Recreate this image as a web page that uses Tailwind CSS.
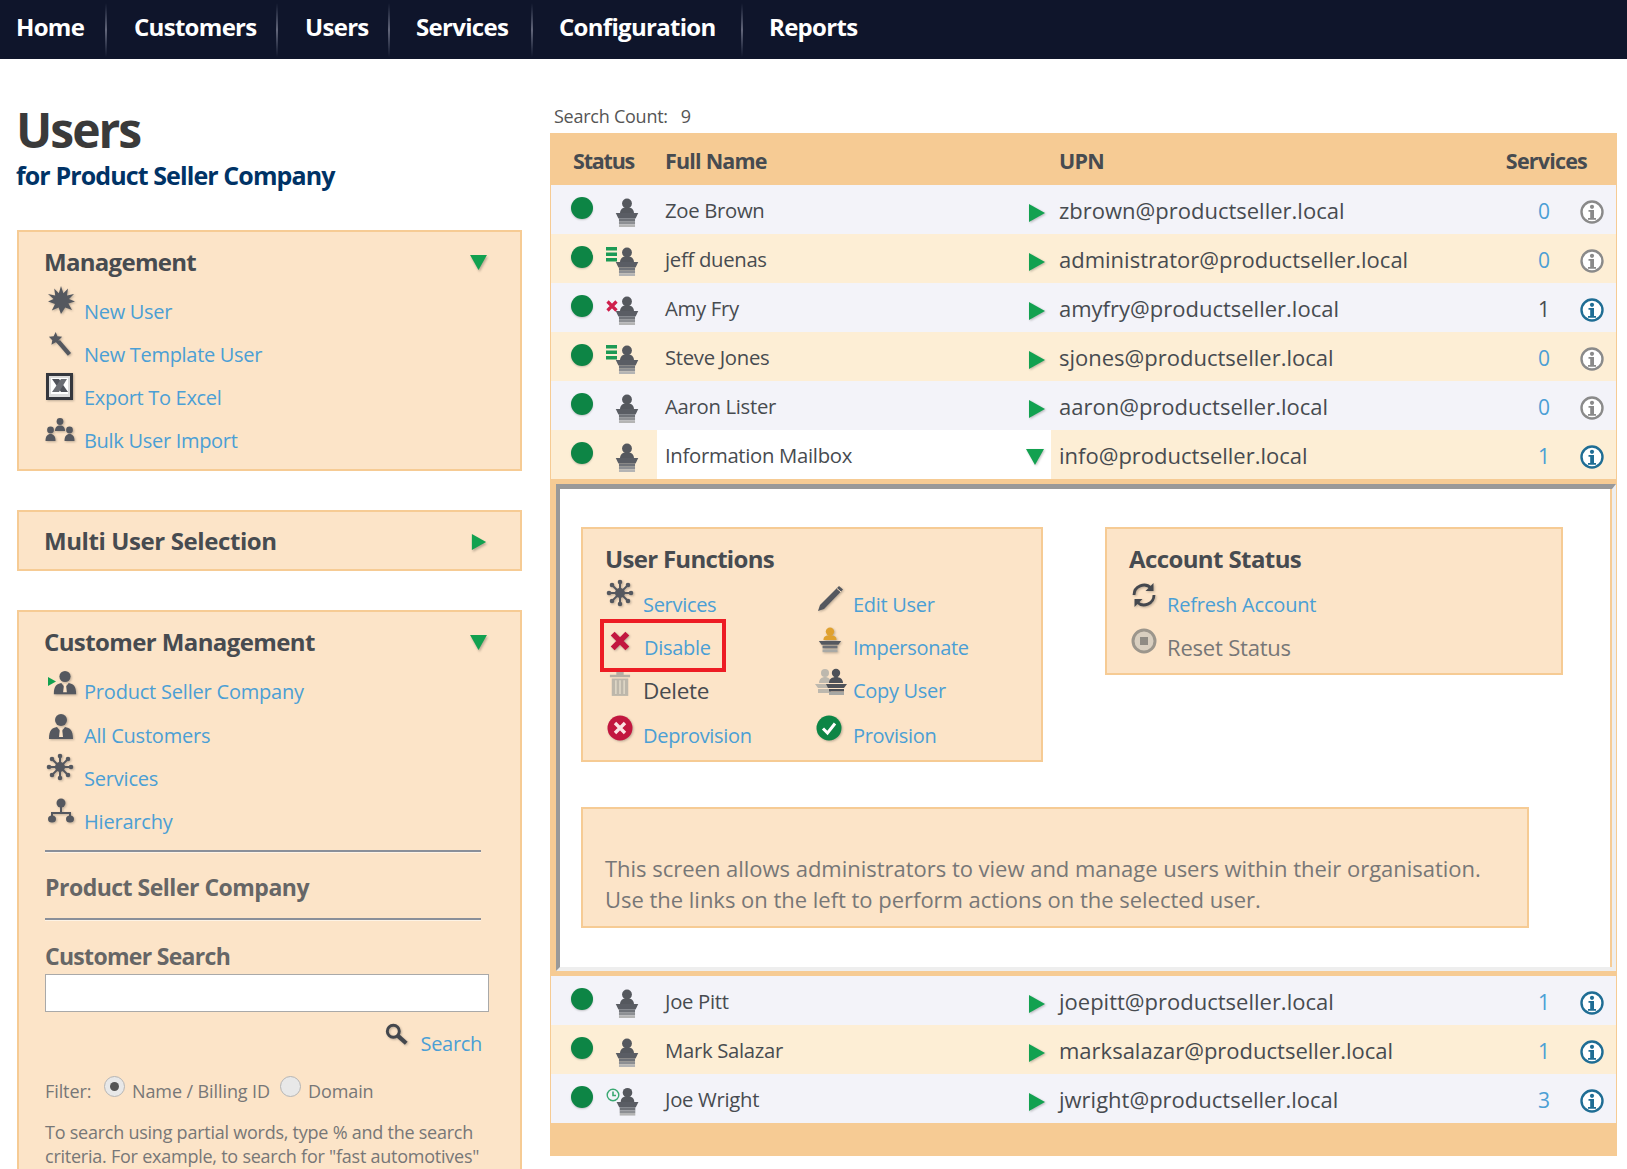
<!DOCTYPE html>
<html lang="en">
<head>
<meta charset="utf-8">
<title>Users</title>
<script src="https://cdn.jsdelivr.net/npm/@tailwindcss/browser@4"></script>
</head>
<body class="bg-white">
<!-- Shared icons -->
<svg class="hidden" xmlns="http://www.w3.org/2000/svg">
  <symbol id="i-user" viewBox="0 0 24 28">
    <circle cx="12" cy="6" r="4.6" fill="#55585e"/>
    <path d="M5.500 15c0-4 3-5.500 6.500-5.500s6.500 1.500 6.500 5.500z" fill="#55585e"/>
    <path d="M1.500 15h21l-2.500 5H4z" fill="#5a5d64"/>
    <path d="M4.500 20h15v3h-15z" fill="#6f7278"/>
    <path d="M4.500 23h15v2.500h-15z" fill="#8d8f93"/>
    <path d="M4.500 25.500h15V28h-15z" fill="#b4b4b4"/>
  </symbol>
  <symbol id="i-list" viewBox="0 0 12 16">
    <path d="M0 0h11v3.500H0zM0 5.500h11V9H0zM0 11h11v3.500H0z" fill="#1c9a55"/>
  </symbol>
  <symbol id="i-redx" viewBox="0 0 12 12">
    <path d="M1.500 1.500l9 9M10.500 1.500l-9 9" stroke="#cf1f4c" stroke-width="3.200"/>
  </symbol>
  <symbol id="i-clock" viewBox="0 0 14 14">
    <circle cx="7" cy="7" r="5.800" fill="none" stroke="#3aa872" stroke-width="1.400"/>
    <path d="M7 3.500V7.500h3" fill="none" stroke="#3aa872" stroke-width="1.600"/>
  </symbol>
  <symbol id="i-right" viewBox="0 0 16 18"><path d="M0 0l16 9L0 18z" fill="#12a150"/></symbol>
  <symbol id="i-down" viewBox="0 0 18 16"><path d="M0 0h18L9 16z" fill="#12a150"/></symbol>
  <symbol id="i-info" viewBox="0 0 24 24">
    <circle cx="12" cy="12" r="10.500" fill="#fff" stroke="currentColor" stroke-width="2.400"/>
    <circle cx="12" cy="6.800" r="2.100" fill="currentColor"/>
    <path d="M8.500 10h5.500v8h2v1.800H8V18h2.200v-6.200H8.500z" fill="currentColor"/>
  </symbol>
  <symbol id="i-burst" viewBox="0 0 28 28">
    <path d="M14 0l2.400 7.200L21 2.600l-1 7L27 8l-5 5 6 2.500-6.600 2 3.600 6.500-6.800-2.500L14 28l-2.400-6.500-6.800 3L8 18 1 15.500 6.500 13 1 8l7.200 1.600-1-7 4.600 4.600z" fill="#55585f"/>
  </symbol>
  <symbol id="i-wand" viewBox="0 0 28 28">
    <path d="M9 0l2 5 5.500.5-4 4 1.200 5.500-4.700-3-5 3L5 9.500 1 5.500 6.500 5z" fill="#55585f"/>
    <path d="M12 11l13 15" stroke="#55585f" stroke-width="5"/>
  </symbol>
  <symbol id="i-excel" viewBox="0 0 27 27">
    <rect x="1.500" y="1.500" width="24" height="24" fill="#dcdcdc" stroke="#35373d" stroke-width="3"/>
    <path d="M5 5h17v16H5z" fill="#fff"/>
    <path d="M6 6h7l9 13h-7z" fill="#50535a"/>
    <path d="M21 6h-6L6 19h7z" fill="#6a6d73"/>
  </symbol>
  <symbol id="i-group" viewBox="0 0 30 26">
    <g fill="#55585f">
      <circle cx="15" cy="3.500" r="3.400"/><path d="M10 13c0-4 2-5.500 5-5.500s5 1.500 5 5.500z"/>
      <circle cx="5.500" cy="12" r="3.400"/><path d="M.5 23c0-5 2-7 5-7s5 2 5 7z"/>
      <circle cx="24.500" cy="12" r="3.400"/><path d="M19.500 23c0-5 2-7 5-7s5 2 5 7z"/>
    </g>
  </symbol>
  <symbol id="i-customer" viewBox="0 0 28 28">
    <circle cx="14" cy="7" r="6" fill="#55585f"/>
    <path d="M2 26c0-9 3-11 8-12l4 5 4-5c5 1 8 3 8 12z" fill="#55585f"/>
    <path d="M13 15h2l1 9h-4z" fill="#fce4c8"/>
  </symbol>
  <symbol id="i-services" viewBox="0 0 28 28">
    <g stroke="#55585f" stroke-width="2" fill="#55585f">
      <path d="M14 2v24M2 14h24M5.500 5.500l17 17M22.500 5.500l-17 17" fill="none"/>
      <circle cx="14" cy="14" r="4"/>
      <circle cx="14" cy="3" r="1.300"/><circle cx="14" cy="25" r="1.300"/><circle cx="3" cy="14" r="1.300"/><circle cx="25" cy="14" r="1.300"/>
      <circle cx="6" cy="6" r="1.300"/><circle cx="22" cy="6" r="1.300"/><circle cx="6" cy="22" r="1.300"/><circle cx="22" cy="22" r="1.300"/>
    </g>
  </symbol>
  <symbol id="i-tree" viewBox="0 0 28 26">
    <circle cx="14" cy="5" r="4.500" fill="#55585f"/>
    <path d="M14 9v6M5 20v-5h18v5" fill="none" stroke="#55585f" stroke-width="2"/>
    <ellipse cx="5" cy="21" rx="4" ry="3.500" fill="#55585f"/><ellipse cx="23" cy="21" rx="4" ry="3.500" fill="#55585f"/>
  </symbol>
  <symbol id="i-search" viewBox="0 0 26 26">
    <circle cx="9" cy="9" r="6.500" fill="none" stroke="#44474d" stroke-width="3.200"/>
    <path d="M14 14l9 8" stroke="#44474d" stroke-width="4.500"/>
  </symbol>
  <symbol id="i-pencil" viewBox="0 0 28 28">
    <path d="M22 2l4 3.500L7 25l-6 2 2-6z" fill="#55585f"/>
    <path d="M20 4.500l4 3.500" stroke="#fce4c8" stroke-width="1"/>
  </symbol>
  <symbol id="i-imp" viewBox="0 0 28 30">
    <circle cx="14" cy="6" r="4.500" fill="#e0a12e"/>
    <path d="M7 15c0-4 3-5 7-5s7 1 7 5z" fill="#e0a12e"/>
    <path d="M2 16h24l-3 4H5z" fill="#55585f"/>
    <path d="M6 21h16v3H6z" fill="#6c6f75"/>
    <path d="M6 25h16v3H6z" fill="#a9a9a5"/>
  </symbol>
  <symbol id="i-copy" viewBox="0 0 32 28">
    <circle cx="10" cy="5" r="4" fill="#bdb8ae"/>
    <path d="M4 15c0-4 3-6 6-6s6 2 6 6zM0 16h16v4H3zM3 21h13v4H3z" fill="#bdb8ae"/>
    <circle cx="21" cy="5" r="4.200" fill="#4e5158"/>
    <path d="M14 15c0-4 3-6 7-6s7 2 7 6zM11 16h21l-3 4H13zM14 21h15v2.500H14z" fill="#4e5158"/>
    <path d="M14 24h15v3H14z" fill="#a7a7a3"/>
  </symbol>
  <symbol id="i-x" viewBox="0 0 24 24">
    <path d="M4 4l16 16M20 4L4 20" stroke="#c2173f" stroke-width="6"/>
  </symbol>
  <symbol id="i-trash" viewBox="0 0 24 28">
    <path d="M1 4h22v2.500H1zM8 1h8v3H8z" fill="#b5afa3"/>
    <path d="M3 8h18v19H3z" fill="#bdb7ab"/>
    <path d="M7.500 10v15M12 10v15M16.500 10v15" stroke="#e5dccb" stroke-width="1.500"/>
  </symbol>
  <symbol id="i-circlex" viewBox="0 0 26 26">
    <circle cx="13" cy="13" r="12.500" fill="#c2173f"/>
    <path d="M8 8l10 10M18 8L8 18" stroke="#fbe3e3" stroke-width="3.400"/>
  </symbol>
  <symbol id="i-check" viewBox="0 0 26 26">
    <circle cx="13" cy="13" r="12.500" fill="#0d8545"/>
    <path d="M7 13.500l4.500 4.500L19 8.500" fill="none" stroke="#fff" stroke-width="3"/>
  </symbol>
  <symbol id="i-refresh" viewBox="0 0 26 26">
    <path d="M3 13A10 10 0 0 1 20 6M23 13A10 10 0 0 1 6 20" fill="none" stroke="#45484e" stroke-width="2.800"/>
    <path d="M22.500 1v8h-8zM3.500 25v-8h8z" fill="#45484e"/>
  </symbol>
  <symbol id="i-stop" viewBox="0 0 26 26">
    <circle cx="13" cy="13" r="11" fill="#d9cfc0" stroke="#9c968c" stroke-width="3"/>
    <rect x="9" y="9" width="8" height="8" fill="#8f8b84"/>
  </symbol>
</svg>

<div class="h-[1169px] overflow-hidden font-['Open_Sans',sans-serif] text-[#474b50]">
  <!-- Top nav -->
  <nav class="flex h-[59px] items-center bg-[#0f152b] text-[24px] font-bold tracking-[-0.7px] text-white">
    <a class="mb-[5px] w-[105px] pl-[16px]">Home</a>
    <span class="h-[54px] w-[2px] bg-linear-to-b from-[#0f152b] via-[#62667a] to-[#0f152b]"></span>
    <a class="mb-[5px] w-[169px] pl-[27px]">Customers</a>
    <span class="h-[54px] w-[2px] bg-linear-to-b from-[#0f152b] via-[#62667a] to-[#0f152b]"></span>
    <a class="mb-[5px] w-[110px] pl-[27px]">Users</a>
    <span class="h-[54px] w-[2px] bg-linear-to-b from-[#0f152b] via-[#62667a] to-[#0f152b]"></span>
    <a class="mb-[5px] w-[141px] pl-[26px]">Services</a>
    <span class="h-[54px] w-[2px] bg-linear-to-b from-[#0f152b] via-[#62667a] to-[#0f152b]"></span>
    <a class="mb-[5px] w-[208px] pl-[26px]">Configuration</a>
    <span class="h-[54px] w-[2px] bg-linear-to-b from-[#0f152b] via-[#62667a] to-[#0f152b]"></span>
    <a class="mb-[5px] pl-[26px]">Reports</a>
  </nav>

  <div class="flex">
    <!-- Left column -->
    <aside class="w-[550px] shrink-0 pl-[17px]">
      <h1 class="mt-[41px] -ml-[1px] text-[48px] leading-[59px] font-bold tracking-[-2px] text-[#3a3a3a]">Users</h1>
      <h2 class="-ml-[1px] text-[25px] leading-[32px] font-bold tracking-[-0.9px] text-[#003366]">for Product Seller Company</h2>

      <section class="mt-[39px] h-[241px] w-[505px] border-2 border-[#f6cb94] bg-[#fce4c8] pl-[26px]">
        <div class="mt-[15px] flex h-[30px] items-center justify-between pr-[33px]">
          <h3 class="-ml-[1px] text-[24px] font-bold tracking-[-0.7px]">Management</h3>
          <svg class="h-[15px] w-[17px] drop-shadow-[1px_2px_1px_rgba(0,0,0,0.25)]"><use href="#i-down"/></svg>
        </div>
        <div class="mt-[13px] text-[20px] tracking-[-0.3px] text-[#4b9fd5]">
          <a class="flex h-[43px] items-center"><span class="w-[39px]"><svg class="-mt-[24px] ml-[2px] h-[28px] w-[28px] drop-shadow-[1px_1px_1px_rgba(0,0,0,0.25)]"><use href="#i-burst"/></svg></span>New User</a>
          <a class="flex h-[43px] items-center"><span class="w-[39px]"><svg class="-mt-[22px] ml-[3px] h-[28px] w-[24px] drop-shadow-[1px_1px_1px_rgba(0,0,0,0.25)]"><use href="#i-wand"/></svg></span>New Template User</a>
          <a class="flex h-[43px] items-center"><span class="w-[39px]"><svg class="-mt-[22px] ml-[1px] h-[27px] w-[27px] drop-shadow-[1px_1px_1px_rgba(0,0,0,0.25)]"><use href="#i-excel"/></svg></span>Export To Excel</a>
          <a class="flex h-[43px] items-center"><span class="w-[39px]"><svg class="-mt-[20px] h-[26px] w-[30px] drop-shadow-[1px_1px_1px_rgba(0,0,0,0.25)]"><use href="#i-group"/></svg></span>Bulk User Import</a>
        </div>
      </section>

      <section class="mt-[39px] flex h-[61px] w-[505px] items-center justify-between border-2 border-[#f6cb94] bg-[#fce4c8] pr-[33px] pl-[26px]">
        <h3 class="-ml-[1px] text-[24px] font-bold tracking-[-0.4px]">Multi User Selection</h3>
        <svg class="mt-[2px] h-[16px] w-[16px] drop-shadow-[1px_2px_1px_rgba(0,0,0,0.25)]"><use href="#i-right"/></svg>
      </section>

      <section class="mt-[39px] h-[600px] w-[505px] border-2 border-[#f6cb94] bg-[#fce4c8] pl-[26px]">
        <div class="mt-[15px] flex h-[30px] items-center justify-between pr-[33px]">
          <h3 class="-ml-[1px] text-[24px] font-bold tracking-[-0.6px]">Customer Management</h3>
          <svg class="h-[15px] w-[17px] drop-shadow-[1px_2px_1px_rgba(0,0,0,0.25)]"><use href="#i-down"/></svg>
        </div>
        <div class="mt-[13px] text-[20px] tracking-[-0.2px] text-[#4b9fd5]">
          <a class="relative flex h-[44px] items-center"><span class="w-[39px]"><svg class="-mt-[18px] ml-[7px] h-[26px] w-[26px] drop-shadow-[1px_1px_1px_rgba(0,0,0,0.25)]"><use href="#i-customer"/></svg><svg class="absolute top-[6px] left-[3px] h-[11px] w-[8px]"><use href="#i-right"/></svg></span>Product Seller Company</a>
          <a class="flex h-[43px] items-center"><span class="w-[39px]"><svg class="-mt-[18px] ml-[2px] h-[28px] w-[28px] drop-shadow-[1px_1px_1px_rgba(0,0,0,0.25)]"><use href="#i-customer"/></svg></span>All Customers</a>
          <a class="flex h-[43px] items-center"><span class="w-[39px]"><svg class="-mt-[24px] ml-[1px] h-[28px] w-[28px] drop-shadow-[1px_1px_1px_rgba(0,0,0,0.25)]"><use href="#i-services"/></svg></span>Services</a>
          <a class="flex h-[43px] items-center"><span class="w-[39px]"><svg class="-mt-[22px] ml-[2px] h-[26px] w-[28px] drop-shadow-[1px_1px_1px_rgba(0,0,0,0.25)]"><use href="#i-tree"/></svg></span>Hierarchy</a>
        </div>
        <div class="mt-[7px] h-[3px] w-[436px] border-t-2 border-[#8a8f99] bg-[#fdf3e6]"></div>
        <h4 class="mt-[19px] text-[23px] leading-[30px] font-bold tracking-[-0.5px] text-[#666]">Product Seller Company</h4>
        <div class="mt-[16px] h-[3px] w-[436px] border-t-2 border-[#8a8f99] bg-[#fdf3e6]"></div>
        <h4 class="mt-[20px] text-[23px] leading-[30px] font-bold tracking-[-0.7px] text-[#666]">Customer Search</h4>
        <input type="text" class="mt-[3px] block h-[38px] w-[444px] border border-[#a9a9a9] bg-white">
        <div class="mt-[17px] flex h-[30px] w-[437px] items-center justify-end text-[20px] tracking-[-0.3px] text-[#4b9fd5]">
          <svg class="mr-[11px] -mt-[19px] h-[24px] w-[24px] drop-shadow-[1px_1px_1px_rgba(0,0,0,0.25)]"><use href="#i-search"/></svg>Search
        </div>
        <div class="mt-[17px] flex h-[30px] items-center text-[18px] tracking-[-0.1px] text-[#777]">
          <span class="w-[59px]">Filter:</span>
          <span class="-mt-[10px] mr-[7px] flex h-[21px] w-[21px] items-center justify-center rounded-full border border-[#b5b5b5] bg-[#e8e8e8]"><span class="h-[9px] w-[9px] rounded-full bg-[#555]"></span></span>
          <span class="w-[148px]">Name / Billing ID</span>
          <span class="-mt-[10px] mr-[7px] h-[21px] w-[21px] rounded-full border border-[#b5b5b5] bg-[#e8e8e8]"></span>
          <span>Domain</span>
        </div>
        <p class="mt-[14px] w-[450px] text-[18px] leading-[24px] tracking-[-0.24px] text-[#777]">To search using partial words, type % and the search criteria. For example, to search for "fast automotives"</p>
      </section>
    </aside>

    <!-- Right column -->
    <main class="w-[1067px] shrink-0">
      <div class="flex h-[74px] items-end pb-[3px] pl-[4px] text-[18px] tracking-[-0.25px] text-[#555]">Search Count:<span class="ml-[13px]">9</span></div>
      <div class="border-x border-[#f6cb94] text-[#474b50]">
        <div class="flex h-[52px] items-center bg-[#f6cb94] pt-[4px] text-[21.500px] font-bold tracking-[-0.8px]">
          <span class="w-[114px] pl-[22px] tracking-[-1.2px]">Status</span>
          <span class="w-[394px]">Full Name</span>
          <span class="flex-1">UPN</span>
          <span class="pr-[29px]">Services</span>
        </div>

        <div class="flex h-[49px] items-center bg-[#f3f3f9]">
          <span class="mb-[3px] ml-[20px] h-[22px] w-[22px] rounded-full bg-[#0d8545] shadow-[0_1px_2px_rgba(0,0,0,0.2)]"></span>
          <span class="ml-[13px] w-[12px]"></span>
          <svg class="mt-[5px] -ml-[4px] h-[30px] w-[26px]"><use href="#i-user"/></svg>
          <span class="ml-[25px] flex h-full w-[394px] items-center"><span class="mt-[1px] flex-1 text-[20.300px] tracking-[-0.3px]">Zoe Brown</span><svg class="mt-[6px] mr-[14px] h-[18px] w-[16px] drop-shadow-[1px_1px_1px_rgba(0,0,0,0.25)]"><use href="#i-right"/></svg></span>
          <span class="mt-[1px] flex-1 text-[22px]">zbrown@productseller.local</span>
          <span class="mt-[5px] ml-[1px] w-[20px] text-center text-[21px] text-[#4b9fd5]">0</span>
          <svg class="mt-[4px] mr-[12px] ml-[26px] h-[24px] w-[24px] text-[#8a8a8a]"><use href="#i-info"/></svg>
        </div>
        <div class="flex h-[49px] items-center bg-[#fdeed5]">
          <span class="mb-[3px] ml-[20px] h-[22px] w-[22px] rounded-full bg-[#0d8545] shadow-[0_1px_2px_rgba(0,0,0,0.2)]"></span>
          <svg class="mb-[8px] ml-[13px] h-[16px] w-[12px]"><use href="#i-list"/></svg>
          <svg class="mt-[5px] -ml-[4px] h-[30px] w-[26px]"><use href="#i-user"/></svg>
          <span class="ml-[25px] flex h-full w-[394px] items-center"><span class="mt-[1px] flex-1 text-[20.300px] tracking-[-0.3px]">jeff duenas</span><svg class="mt-[6px] mr-[14px] h-[18px] w-[16px] drop-shadow-[1px_1px_1px_rgba(0,0,0,0.25)]"><use href="#i-right"/></svg></span>
          <span class="mt-[1px] flex-1 text-[22px]">administrator@productseller.local</span>
          <span class="mt-[5px] ml-[1px] w-[20px] text-center text-[21px] text-[#4b9fd5]">0</span>
          <svg class="mt-[4px] mr-[12px] ml-[26px] h-[24px] w-[24px] text-[#8a8a8a]"><use href="#i-info"/></svg>
        </div>
        <div class="flex h-[49px] items-center bg-[#f3f3f9]">
          <span class="mb-[3px] ml-[20px] h-[22px] w-[22px] rounded-full bg-[#0d8545] shadow-[0_1px_2px_rgba(0,0,0,0.2)]"></span>
          <svg class="mb-[4px] ml-[13px] h-[12px] w-[12px]"><use href="#i-redx"/></svg>
          <svg class="mt-[5px] -ml-[4px] h-[30px] w-[26px]"><use href="#i-user"/></svg>
          <span class="ml-[25px] flex h-full w-[394px] items-center"><span class="mt-[1px] flex-1 text-[20.300px] tracking-[-0.3px]">Amy Fry</span><svg class="mt-[6px] mr-[14px] h-[18px] w-[16px] drop-shadow-[1px_1px_1px_rgba(0,0,0,0.25)]"><use href="#i-right"/></svg></span>
          <span class="mt-[1px] flex-1 text-[22px]">amyfry@productseller.local</span>
          <span class="mt-[5px] ml-[1px] w-[20px] text-center text-[21px]">1</span>
          <svg class="mt-[4px] mr-[12px] ml-[26px] h-[24px] w-[24px] text-[#1f6d94]"><use href="#i-info"/></svg>
        </div>
        <div class="flex h-[49px] items-center bg-[#fdeed5]">
          <span class="mb-[3px] ml-[20px] h-[22px] w-[22px] rounded-full bg-[#0d8545] shadow-[0_1px_2px_rgba(0,0,0,0.2)]"></span>
          <svg class="mb-[8px] ml-[13px] h-[16px] w-[12px]"><use href="#i-list"/></svg>
          <svg class="mt-[5px] -ml-[4px] h-[30px] w-[26px]"><use href="#i-user"/></svg>
          <span class="ml-[25px] flex h-full w-[394px] items-center"><span class="mt-[1px] flex-1 text-[20.300px] tracking-[-0.3px]">Steve Jones</span><svg class="mt-[6px] mr-[14px] h-[18px] w-[16px] drop-shadow-[1px_1px_1px_rgba(0,0,0,0.25)]"><use href="#i-right"/></svg></span>
          <span class="mt-[1px] flex-1 text-[22px]">sjones@productseller.local</span>
          <span class="mt-[5px] ml-[1px] w-[20px] text-center text-[21px] text-[#4b9fd5]">0</span>
          <svg class="mt-[4px] mr-[12px] ml-[26px] h-[24px] w-[24px] text-[#8a8a8a]"><use href="#i-info"/></svg>
        </div>
        <div class="flex h-[49px] items-center bg-[#f3f3f9]">
          <span class="mb-[3px] ml-[20px] h-[22px] w-[22px] rounded-full bg-[#0d8545] shadow-[0_1px_2px_rgba(0,0,0,0.2)]"></span>
          <span class="ml-[13px] w-[12px]"></span>
          <svg class="mt-[5px] -ml-[4px] h-[30px] w-[26px]"><use href="#i-user"/></svg>
          <span class="ml-[25px] flex h-full w-[394px] items-center"><span class="mt-[1px] flex-1 text-[20.300px] tracking-[-0.3px]">Aaron Lister</span><svg class="mt-[6px] mr-[14px] h-[18px] w-[16px] drop-shadow-[1px_1px_1px_rgba(0,0,0,0.25)]"><use href="#i-right"/></svg></span>
          <span class="mt-[1px] flex-1 text-[22px]">aaron@productseller.local</span>
          <span class="mt-[5px] ml-[1px] w-[20px] text-center text-[21px] text-[#4b9fd5]">0</span>
          <svg class="mt-[4px] mr-[12px] ml-[26px] h-[24px] w-[24px] text-[#8a8a8a]"><use href="#i-info"/></svg>
        </div>
        <div class="flex h-[49px] items-center bg-[#fdeed5]">
          <span class="mb-[3px] ml-[20px] h-[22px] w-[22px] rounded-full bg-[#0d8545] shadow-[0_1px_2px_rgba(0,0,0,0.2)]"></span>
          <span class="ml-[13px] w-[12px]"></span>
          <svg class="mt-[5px] -ml-[4px] h-[30px] w-[26px]"><use href="#i-user"/></svg>
          <span class="ml-[17px] flex h-full w-[394px] items-center bg-white pl-[8px]"><span class="mt-[1px] flex-1 text-[20.300px] tracking-[-0.3px]">Information Mailbox</span><svg class="mt-[5px] mr-[7px] h-[16px] w-[18px] drop-shadow-[1px_1px_1px_rgba(0,0,0,0.25)]"><use href="#i-down"/></svg></span>
          <span class="mt-[1px] flex-1 pl-[8px] text-[22px]">info@productseller.local</span>
          <span class="mt-[5px] ml-[1px] w-[20px] text-center text-[21px] text-[#4b9fd5]">1</span>
          <svg class="mt-[4px] mr-[12px] ml-[26px] h-[24px] w-[24px] text-[#1f6d94]"><use href="#i-info"/></svg>
        </div>

        <!-- Expanded user detail -->
        <div class="bg-[#f6cb94] pt-[5px] pb-[5px] pl-[5px]">
          <div class="h-[487px] border-4 border-t-[5px] border-[#eeeeee] border-t-[#999999] border-l-[#999999] bg-white">
            <div class="h-full border-r-2 border-[#f6cb94] pl-[21px]">
              <div class="flex items-start pt-[38px]">
                <div class="relative h-[235px] w-[462px] border-2 border-[#f6cb94] bg-[#fce4c8] pt-[16px] pl-[22px]">
                  <h3 class="text-[24px] leading-[28px] font-bold tracking-[-0.7px]">User Functions</h3>
                  <div class="mt-[10px] grid grid-cols-[211px_1fr] text-[20px] tracking-[-0.3px] text-[#4b9fd5]">
                    <a class="flex h-[43px] items-center"><span class="w-[38px]"><svg class="-mt-[24px] ml-[1px] h-[28px] w-[28px] drop-shadow-[1px_1px_1px_rgba(0,0,0,0.25)]"><use href="#i-services"/></svg></span>Services</a>
                    <a class="flex h-[43px] items-center"><span class="w-[37px]"><svg class="-mt-[14px] ml-[1px] h-[28px] w-[28px] drop-shadow-[1px_1px_1px_rgba(0,0,0,0.25)]"><use href="#i-pencil"/></svg></span>Edit User</a>
                    <a class="flex h-[43px] items-center"><span class="w-[39px]"><svg class="-mt-[14px] ml-[4px] h-[22px] w-[22px] drop-shadow-[1px_1px_1px_rgba(0,0,0,0.25)]"><use href="#i-x"/></svg></span>Disable</a>
                    <a class="flex h-[43px] items-center"><span class="w-[37px]"><svg class="-mt-[16px] h-[28px] w-[28px] drop-shadow-[1px_1px_1px_rgba(0,0,0,0.25)]"><use href="#i-imp"/></svg></span>Impersonate</a>
                    <a class="flex h-[43px] items-center text-[22.500px] text-[#474b50]"><span class="w-[38px]"><svg class="-mt-[14px] ml-[4px] h-[28px] w-[22px]"><use href="#i-trash"/></svg></span>Delete</a>
                    <a class="flex h-[43px] items-center"><span class="w-[37px]"><svg class="-mt-[18px] -ml-[1px] h-[28px] w-[32px]"><use href="#i-copy"/></svg></span>Copy User</a>
                    <a class="flex h-[43px] items-center pt-[4px]"><span class="w-[38px]"><svg class="-mt-[16px] ml-[2px] h-[26px] w-[26px] drop-shadow-[1px_1px_1px_rgba(0,0,0,0.25)]"><use href="#i-circlex"/></svg></span>Deprovision</a>
                    <a class="flex h-[43px] items-center pt-[4px]"><span class="w-[37px]"><svg class="-mt-[16px] h-[26px] w-[26px] drop-shadow-[1px_1px_1px_rgba(0,0,0,0.25)]"><use href="#i-check"/></svg></span>Provision</a>
                  </div>
                  <!-- red annotation box -->
                  <div class="absolute top-[90px] left-[17px] h-[53px] w-[126px] border-4 border-[#ed1c24]"></div>
                </div>
                <div class="ml-[62px] h-[148px] w-[458px] border-2 border-[#f6cb94] bg-[#fce4c8] pt-[16px] pl-[22px]">
                  <h3 class="text-[24px] leading-[28px] font-bold tracking-[-0.6px]">Account Status</h3>
                  <div class="mt-[10px] text-[20px] tracking-[-0.2px]">
                    <a class="flex h-[43px] items-center text-[#4b9fd5]"><span class="w-[38px]"><svg class="-mt-[20px] ml-[2px] h-[26px] w-[26px] drop-shadow-[1px_1px_1px_rgba(0,0,0,0.25)]"><use href="#i-refresh"/></svg></span>Refresh Account</a>
                    <a class="flex h-[43px] items-center text-[22px] text-[#777]"><span class="w-[38px]"><svg class="-mt-[14px] ml-[2px] h-[26px] w-[26px]"><use href="#i-stop"/></svg></span>Reset Status</a>
                  </div>
                </div>
              </div>
              <div class="mt-[45px] h-[121px] w-[948px] border-2 border-[#f6cb94] bg-[#fce4c8] pt-[44px] pl-[22px] text-[22px] leading-[31px] tracking-[-0.02px] text-[#777]">
                This screen allows administrators to view and manage users within their organisation.<br>Use the links on the left to perform actions on the selected user.
              </div>
            </div>
          </div>
        </div>

        <div class="flex h-[49px] items-center bg-[#f3f3f9]">
          <span class="mb-[3px] ml-[20px] h-[22px] w-[22px] rounded-full bg-[#0d8545] shadow-[0_1px_2px_rgba(0,0,0,0.2)]"></span>
          <span class="ml-[13px] w-[12px]"></span>
          <svg class="mt-[5px] -ml-[4px] h-[30px] w-[26px]"><use href="#i-user"/></svg>
          <span class="ml-[25px] flex h-full w-[394px] items-center"><span class="mt-[1px] flex-1 text-[20.300px] tracking-[-0.3px]">Joe Pitt</span><svg class="mt-[6px] mr-[14px] h-[18px] w-[16px] drop-shadow-[1px_1px_1px_rgba(0,0,0,0.25)]"><use href="#i-right"/></svg></span>
          <span class="mt-[1px] flex-1 text-[22px]">joepitt@productseller.local</span>
          <span class="mt-[5px] ml-[1px] w-[20px] text-center text-[21px] text-[#4b9fd5]">1</span>
          <svg class="mt-[4px] mr-[12px] ml-[26px] h-[24px] w-[24px] text-[#1f6d94]"><use href="#i-info"/></svg>
        </div>
        <div class="flex h-[49px] items-center bg-[#fdeed5]">
          <span class="mb-[3px] ml-[20px] h-[22px] w-[22px] rounded-full bg-[#0d8545] shadow-[0_1px_2px_rgba(0,0,0,0.2)]"></span>
          <span class="ml-[13px] w-[12px]"></span>
          <svg class="mt-[5px] -ml-[4px] h-[30px] w-[26px]"><use href="#i-user"/></svg>
          <span class="ml-[25px] flex h-full w-[394px] items-center"><span class="mt-[1px] flex-1 text-[20.300px] tracking-[-0.3px]">Mark Salazar</span><svg class="mt-[6px] mr-[14px] h-[18px] w-[16px] drop-shadow-[1px_1px_1px_rgba(0,0,0,0.25)]"><use href="#i-right"/></svg></span>
          <span class="mt-[1px] flex-1 text-[22px]">marksalazar@productseller.local</span>
          <span class="mt-[5px] ml-[1px] w-[20px] text-center text-[21px] text-[#4b9fd5]">1</span>
          <svg class="mt-[4px] mr-[12px] ml-[26px] h-[24px] w-[24px] text-[#1f6d94]"><use href="#i-info"/></svg>
        </div>
        <div class="flex h-[49px] items-center bg-[#f3f3f9]">
          <span class="mb-[3px] ml-[20px] h-[22px] w-[22px] rounded-full bg-[#0d8545] shadow-[0_1px_2px_rgba(0,0,0,0.2)]"></span>
          <svg class="mb-[8px] ml-[13px] h-[14px] w-[14px]"><use href="#i-clock"/></svg>
          <svg class="mt-[5px] -ml-[5px] h-[30px] w-[25px]"><use href="#i-user"/></svg>
          <span class="ml-[25px] flex h-full w-[394px] items-center"><span class="mt-[1px] flex-1 text-[20.300px] tracking-[-0.3px]">Joe Wright</span><svg class="mt-[6px] mr-[14px] h-[18px] w-[16px] drop-shadow-[1px_1px_1px_rgba(0,0,0,0.25)]"><use href="#i-right"/></svg></span>
          <span class="mt-[1px] flex-1 text-[22px]">jwright@productseller.local</span>
          <span class="mt-[5px] ml-[1px] w-[20px] text-center text-[21px] text-[#4b9fd5]">3</span>
          <svg class="mt-[4px] mr-[12px] ml-[26px] h-[24px] w-[24px] text-[#1f6d94]"><use href="#i-info"/></svg>
        </div>
        <div class="h-[33px] bg-[#f6cb94]"></div>
      </div>
    </main>
  </div>
</div>
</body>
</html>
